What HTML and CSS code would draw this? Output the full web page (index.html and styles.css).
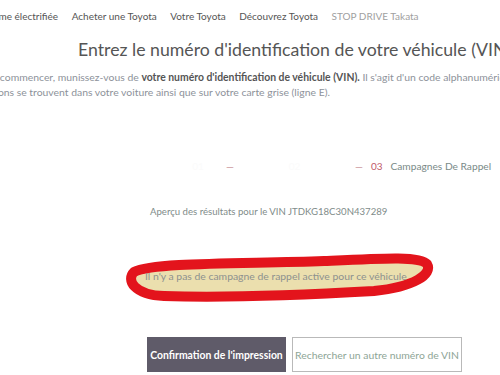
FILE: index.html
```html
<!DOCTYPE html>
<html lang="fr">
<head>
    <meta charset="UTF-8">
    <meta name="viewport" content="width=device-width, initial-scale=1.0">
    <title>Campagnes de rappel</title>
    <link rel="stylesheet" href="styles.css">
</head>
<body>
    <div class="page">
        <nav class="nav">
            <a class="nav-item">Gamme électrifiée</a>
            <a class="nav-item">Acheter une Toyota</a>
            <a class="nav-item">Votre Toyota</a>
            <a class="nav-item">Découvrez Toyota</a>
            <a class="nav-item nav-light">STOP DRIVE Takata</a>
        </nav>

        <h1 class="title">Entrez le numéro d'identification de votre véhicule (VIN)</h1>
        <div class="intro">
            <p class="intro-first">Pour commencer, munissez-vous de <b>votre numéro d'identification de véhicule (VIN).</b> Il s'agit d'un code alphanumérique de 17 caractères.</p>
            <p class="intro-second">Ces informations se trouvent dans votre voiture ainsi que sur votre carte grise (ligne E).</p>
        </div>

        <!-- étapes -->
        <div class="steps">
            <span class="step-faint step-one">01</span>
            <span class="dash">—</span>
            <span class="step-faint step-two">02</span>
            <span class="dash">—</span>
            <span class="step-num">03</span>
            <span class="step-label">Campagnes De Rappel</span>
        </div>

        <div class="result">Aperçu des résultats pour le VIN JTDKG18C30N437289</div>

        <div class="notice">
            <svg class="notice-mark" viewBox="0 0 312 52" width="312" height="52">
                <path d="M 10 21 C 30 11, 120 13, 200 10 C 262 7, 296 5, 303 13 C 309 23, 290 36, 250 40 C 180 44, 100 47, 40 45 C 10 44, 2 29, 10 21 Z"
                      fill="#ebdfae" stroke="#e3141c" stroke-width="10" stroke-linejoin="round" />
            </svg>
            <span class="notice-text">Il n'y a pas de campagne de rappel active pour ce véhicule</span>
        </div>

        <div class="actions">
            <button class="btn btn-dark">Confirmation de l'impression</button>
            <button class="btn btn-light">Rechercher un autre numéro de VIN</button>
        </div>
    </div>
</body>
</html>
```

FILE: styles.css
```css
body {
    margin: 0;
    background-color: #fff;
    font-family: Lato, "Noto Sans", sans-serif;
    color: #555;
    overflow: hidden;
}

.page {
    width: 500px;
}

.nav {
    display: flex;
    gap: 13.5px;
    margin-left: -22px;
    padding-top: 10px;
    font-size: 10px;
    white-space: nowrap;
}

.nav-item {
    color: #555;
}

.nav-light {
    color: #a0a0a0;
}

.title {
    margin: 17px 0 0 78px;
    font-size: 17.7px;
    font-weight: 400;
    color: #555;
    white-space: nowrap;
}

.intro {
    margin-top: 11px;
    font-size: 10.4px;
    color: #8d929a;
    white-space: nowrap;
}

.intro p {
    margin: 0 0 3px 0;
}

.intro-first {
    margin-left: -24px !important;
}

.intro-second {
    margin-left: -63px !important;
}

.intro b {
    color: #555;
    font-weight: 700;
}

.steps {
    display: flex;
    align-items: center;
    margin: 62px 0 0 170px;
    font-size: 10px;
    white-space: nowrap;
}

.step-faint {
    color: #fbfbfb;
    text-align: center;
}

.step-one {
    width: 56px;
}

.step-two {
    width: 121px;
}

.dash {
    color: #c58b92;
}

.step-num {
    color: #c05a6a;
    margin-left: 8px;
}

.step-label {
    color: #7a8a88;
    margin-left: 8px;
    font-size: 10.2px;
}

.result {
    margin: 34px 0 0 150px;
    font-size: 9.6px;
    color: #7f8c8a;
}

.notice {
    position: relative;
    display: flex;
    align-items: center;
    width: 312px;
    height: 52px;
    margin: 34px 0 0 124px;
}

.notice-mark {
    position: absolute;
    left: 0;
    top: 0;
}

.notice-text {
    position: relative;
    margin-left: 21px;
    margin-top: -3px;
    font-size: 10.4px;
    color: #8d918f;
    white-space: nowrap;
}

.actions {
    display: flex;
    gap: 6px;
    margin: 34px 0 0 147px;
}

.btn {
    height: 35px;
    padding: 0;
    font-family: Lato, "Noto Sans", sans-serif;
    font-size: 10.4px;
    white-space: nowrap;
    cursor: pointer;
}

.btn-dark {
    width: 139px;
    border: none;
    background-color: #5f5b69;
    color: #fff;
    font-weight: 700;
}

.btn-light {
    width: 170px;
    border: 1px solid #b9b9b9;
    background-color: #fff;
    color: #8ea596;
}
```
